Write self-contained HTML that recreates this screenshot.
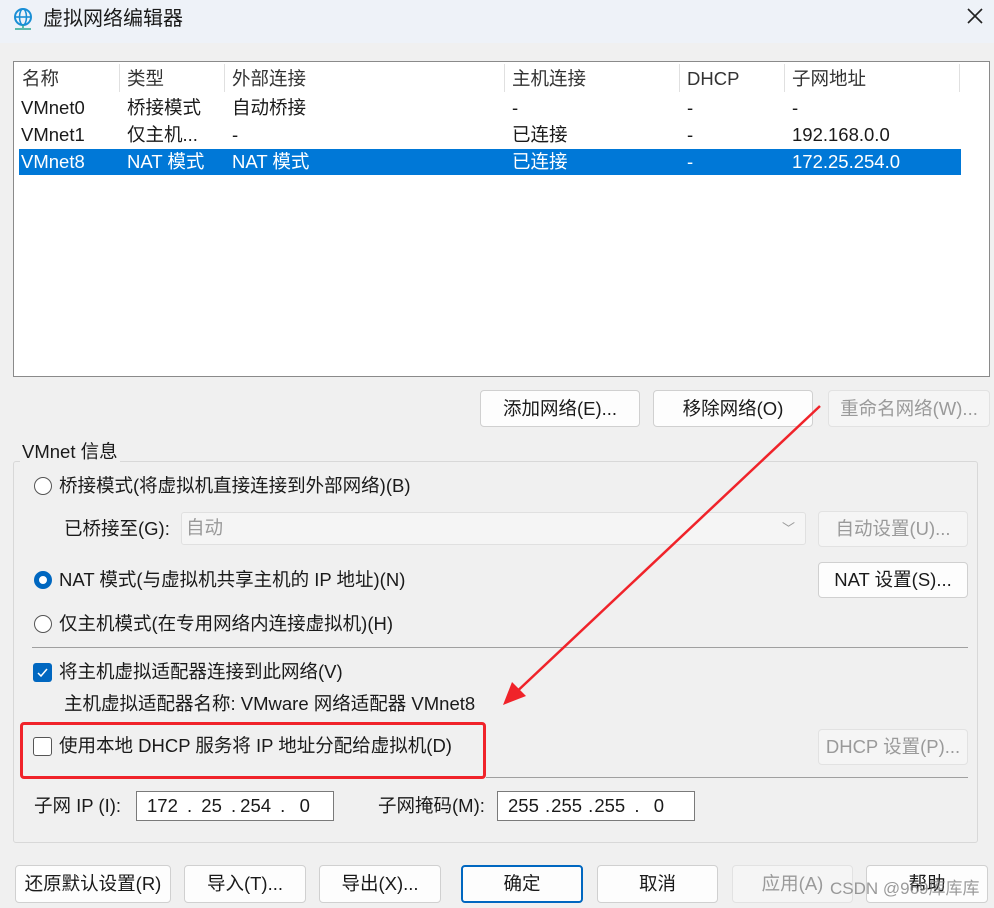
<!DOCTYPE html><html><head><meta charset="utf-8"><style>
*{box-sizing:border-box;margin:0;padding:0}
body{width:994px;height:908px;background:#f0f0f0;position:relative;overflow:hidden;font-family:"Liberation Sans","Noto Sans CJK SC",sans-serif;font-size:18.5px;color:#1a1a1a;line-height:24px}
.a{position:absolute;white-space:nowrap;line-height:24px}
.btn{position:absolute;background:#fdfdfd;border:1px solid #d0d0d0;border-radius:4px;text-align:center;display:flex;align-items:center;justify-content:center;line-height:24px}
.dis{color:#9a9a9a;background:#f5f5f5;border-color:#e2e2e2}
.rad{position:absolute;width:18px;height:18px;border:1.5px solid #555;border-radius:50%;background:#fff}
.box{position:absolute;background:#fff;border:1px solid #7a7a7a}
</style></head><body>
<div class="a" style="left:0;top:0;width:994px;height:43px;background:#eef2f8"></div>
<svg class="a" style="left:12px;top:7px" width="22" height="24" viewBox="0 0 22 24"><circle cx="11" cy="10" r="8" fill="none" stroke="#1a8fd6" stroke-width="2"/><ellipse cx="11" cy="10" rx="3.5" ry="8" fill="none" stroke="#1a8fd6" stroke-width="1.6"/><path d="M3 10H19" stroke="#1a8fd6" stroke-width="1.6"/><path d="M11 18V21M3 22H19" stroke="#2aa890" stroke-width="1.5"/></svg>
<div class="a" style="left:43px;top:7px;font-size:20px">虚拟网络编辑器</div>
<svg class="a" style="left:967px;top:8px" width="16" height="16"><path d="M1 1L15 15M15 1L1 15" stroke="#222" stroke-width="1.6"/></svg>
<div class="box" style="left:13px;top:61px;width:977px;height:316px;border-color:#8a8a8a"></div>
<div class="a" style="left:19px;top:149px;width:942px;height:26px;background:#0078d7"></div>
<div class="a" style="left:119px;top:64px;width:1px;height:28px;background:#e0e0e0"></div>
<div class="a" style="left:224px;top:64px;width:1px;height:28px;background:#e0e0e0"></div>
<div class="a" style="left:504px;top:64px;width:1px;height:28px;background:#e0e0e0"></div>
<div class="a" style="left:679px;top:64px;width:1px;height:28px;background:#e0e0e0"></div>
<div class="a" style="left:784px;top:64px;width:1px;height:28px;background:#e0e0e0"></div>
<div class="a" style="left:959px;top:64px;width:1px;height:28px;background:#e0e0e0"></div>
<div class="a" style="top:67px;left:22px;color:#333">名称</div><div class="a" style="top:67px;left:127px;color:#333">类型</div><div class="a" style="top:67px;left:232px;color:#333">外部连接</div><div class="a" style="top:67px;left:512px;color:#333">主机连接</div><div class="a" style="top:67px;left:687px;color:#333">DHCP</div><div class="a" style="top:67px;left:792px;color:#333">子网地址</div>
<div class="a" style="top:96px;left:21px">VMnet0</div><div class="a" style="top:96px;left:127px">桥接模式</div><div class="a" style="top:96px;left:232px">自动桥接</div><div class="a" style="top:96px;left:512px">-</div><div class="a" style="top:96px;left:687px">-</div><div class="a" style="top:96px;left:792px">-</div>
<div class="a" style="top:123px;left:21px">VMnet1</div><div class="a" style="top:123px;left:127px">仅主机...</div><div class="a" style="top:123px;left:232px">-</div><div class="a" style="top:123px;left:512px">已连接</div><div class="a" style="top:123px;left:687px">-</div><div class="a" style="top:123px;left:792px">192.168.0.0</div>
<div class="a" style="top:150px;left:21px;color:#fff">VMnet8</div><div class="a" style="top:150px;left:127px;color:#fff">NAT 模式</div><div class="a" style="top:150px;left:232px;color:#fff">NAT 模式</div><div class="a" style="top:150px;left:512px;color:#fff">已连接</div><div class="a" style="top:150px;left:687px;color:#fff">-</div><div class="a" style="top:150px;left:792px;color:#fff">172.25.254.0</div>
<div class="btn" style="left:480px;top:390px;width:160px;height:37px">添加网络(E)...</div>
<div class="btn" style="left:653px;top:390px;width:160px;height:37px">移除网络(O)</div>
<div class="btn dis" style="left:828px;top:390px;width:162px;height:37px">重命名网络(W)...</div>
<div class="a" style="left:13px;top:461px;width:965px;height:382px;border:1px solid #d8d8d8;border-radius:3px"></div>
<div class="a" style="left:20px;top:440px;background:#f0f0f0;padding:0 2px">VMnet 信息</div>
<div class="rad" style="left:34px;top:477px"></div>
<div class="a" style="left:59px;top:474px">桥接模式(将虚拟机直接连接到外部网络)(B)</div>
<div class="a" style="left:64px;top:517px">已桥接至(G):</div>
<div class="a" style="left:181px;top:512px;width:625px;height:33px;background:#f5f5f5;border:1px solid #e0e0e0;border-radius:3px;color:#9a9a9a;padding:3px 4px">自动<span style="position:absolute;right:10px;top:4px;font-size:13px">﹀</span></div>
<div class="btn dis" style="left:818px;top:511px;width:150px;height:36px">自动设置(U)...</div>
<div class="rad" style="left:34px;top:571px;border-color:#0067c0;border-width:5px"></div>
<div class="a" style="left:59px;top:568px">NAT 模式(与虚拟机共享主机的 IP 地址)(N)</div>
<div class="btn" style="left:818px;top:562px;width:150px;height:36px">NAT 设置(S)...</div>
<div class="rad" style="left:34px;top:615px"></div>
<div class="a" style="left:59px;top:612px">仅主机模式(在专用网络内连接虚拟机)(H)</div>
<div class="a" style="left:32px;top:647px;width:936px;height:1px;background:#a0a0a0"></div>
<div class="a" style="left:33px;top:663px;width:19px;height:19px;background:#0067c0;border-radius:3px"></div>
<svg class="a" style="left:33px;top:663px" width="19" height="19"><path d="M5 10L8 13L14 6" fill="none" stroke="#fff" stroke-width="1.5"/></svg>
<div class="a" style="left:59px;top:660px">将主机虚拟适配器连接到此网络(V)</div>
<div class="a" style="left:64px;top:692px">主机虚拟适配器名称: VMware 网络适配器 VMnet8</div>
<div class="a" style="left:20px;top:722px;width:466px;height:57px;border:3px solid #f0232a;border-radius:4px"></div>
<div class="a" style="left:33px;top:737px;width:19px;height:19px;border:1.5px solid #555;border-radius:3px;background:#fff"></div>
<div class="a" style="left:59px;top:734px">使用本地 DHCP 服务将 IP 地址分配给虚拟机(D)</div>
<div class="btn dis" style="left:818px;top:729px;width:150px;height:36px">DHCP 设置(P)...</div>
<div class="a" style="left:486px;top:777px;width:482px;height:1px;background:#a0a0a0"></div>
<div class="a" style="left:34px;top:794px">子网 IP (I):</div>
<div class="box" style="left:136px;top:791px;width:198px;height:30px;padding:2px 10px">172 <span style="margin:0 4px">.</span> 25 <span style="margin:0 4px">.</span>254 <span style="margin:0 4px">.</span> &nbsp;0</div>
<div class="a" style="left:378px;top:794px">子网掩码(M):</div>
<div class="box" style="left:497px;top:791px;width:198px;height:30px;padding:2px 10px">255 <span style="margin:0 1px">.</span>255 <span style="margin:0 1px">.</span>255 <span style="margin:0 4px">.</span> &nbsp;0</div>
<div class="btn" style="left:15px;top:865px;width:156px;height:38px">还原默认设置(R)</div>
<div class="btn" style="left:184px;top:865px;width:122px;height:38px">导入(T)...</div>
<div class="btn" style="left:319px;top:865px;width:122px;height:38px">导出(X)...</div>
<div class="btn" style="left:461px;top:865px;width:122px;height:38px;border:2px solid #0067c0">确定</div>
<div class="btn" style="left:597px;top:865px;width:121px;height:38px">取消</div>
<div class="btn dis" style="left:732px;top:865px;width:121px;height:38px">应用(A)</div>
<div class="btn" style="left:866px;top:865px;width:122px;height:38px">帮助</div>
<div class="a" style="left:830px;top:877px;color:rgba(120,120,120,.75);font-size:17px">CSDN @969库库库</div>
<svg class="a" style="left:0;top:0" width="994" height="908"><path d="M820 406L510 698" stroke="#f0232a" stroke-width="2.5"/><path d="M503 705L512 682L526 696Z" fill="#f0232a"/></svg>
</body></html>
